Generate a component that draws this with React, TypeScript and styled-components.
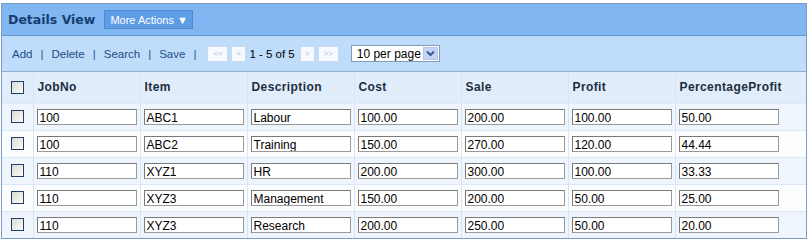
import React from "react";
import styled, { createGlobalStyle } from "styled-components";

const Global = createGlobalStyle`
  html, body { margin: 0; padding: 0; background: #ffffff; }
  body { font-family: "Liberation Sans", Arial, sans-serif; }
`;

const Panel = styled.div`
  margin: 3px 0 0 1px;
  width: 806px;
  box-sizing: border-box;
  border: 1px solid #7a9cc4;
  background: #ffffff;
`;

const TitleBar = styled.div`
  height: 31px;
  display: flex;
  align-items: center;
  gap: 9px;
  padding: 0 6px;
  background: #80b6f2;
  border-bottom: 1px solid #6a95c6;
`;

const Title = styled.div`
  font-family: "DejaVu Sans", Verdana, sans-serif;
  font-weight: bold;
  font-size: 12.5px;
  color: #163e6e;
`;

const MoreButton = styled.div`
  width: 89px;
  height: 19px;
  box-sizing: border-box;
  padding: 0 5px;
  display: flex;
  align-items: center;
  background: #5f9ce6;
  border: 1px solid #4f88cf;
  color: #ffffff;
  font-size: 11px;
  white-space: nowrap;
`;

const Toolbar = styled.div`
  height: 35px;
  display: flex;
  align-items: center;
  padding: 0 10px;
  background: #bfdcfa;
  border-bottom: 1px solid #8db1d9;
  font-size: 11.5px;
  color: #1d4e88;
`;

const Link = styled.span`
  color: #1d4e88;
`;

const Sep = styled.span`
  margin: 0 8px;
  color: #1d4e88;
`;

const Pager = styled.div`
  display: flex;
  align-items: center;
  gap: 3px;
  margin-left: 3px;
  font-size: 11.5px;
  color: #000;
`;

const PageBtn = styled.div<{ $w: number }>`
  width: ${(p) => p.$w}px;
  height: 16px;
  box-sizing: border-box;
  border: 1px solid #c9daee;
  background: #f6f9fd;
  color: #a9bfd8;
  font-size: 8px;
  display: flex;
  align-items: center;
  justify-content: center;
`;

const PageText = styled.span`
  margin: 0 2px 0 0;
`;

const Select = styled.div`
  margin-left: 12px;
  width: 89px;
  height: 17px;
  box-sizing: border-box;
  border: 1px solid #7f9db9;
  background: #ffffff;
  display: flex;
  align-items: center;
  justify-content: space-between;
  padding: 0 1px 0 5px;
  font-size: 12px;
  color: #000;
`;

const SelectArrow = styled.div`
  width: 15px;
  height: 13px;
  background: #c5d4f4;
  border: 1px solid #b4c6ea;
  box-sizing: border-box;
  display: flex;
  align-items: center;
  justify-content: center;
`;

const Table = styled.table`
  width: 100%;
  border-collapse: collapse;
  table-layout: fixed;
`;

const HeadRow = styled.tr`
  height: 31px;
  background: #e1edfb;
`;

const Th = styled.th`
  text-align: left;
  padding: 0 0 0 4px;
  font-size: 12px;
  font-weight: bold;
  letter-spacing: 0.4px;
  color: #1e2d3f;
  border-left: 1px solid #d8e5f4;
  white-space: nowrap;
  &:first-child { border-left: none; padding-left: 9px; }
`;

const Row = styled.tr<{ $alt: boolean }>`
  height: 27px;
  background: ${(p) => (p.$alt ? "#fbfdff" : "#eef5fd")};
  border-top: 1px solid #dde8f5;
`;

const Td = styled.td`
  padding: 0 0 0 3px;
  border-left: 1px solid #d8e5f4;
  vertical-align: middle;
  &:first-child { border-left: none; padding-left: 9px; }
`;

const Check = styled.div`
  width: 13px;
  height: 13px;
  box-sizing: border-box;
  border: 1px solid #1f3f66;
  background: linear-gradient(135deg, #dcdcd6 0%, #f4f4f0 80%, #ffffff 100%);
`;

const Input = styled.div`
  width: 100px;
  height: 16px;
  box-sizing: border-box;
  border: 1px solid #9a9a9a;
  border-top-color: #7a7a7a;
  border-left-color: #7a7a7a;
  background: #ffffff;
  font-size: 12px;
  line-height: 17px;
  padding-left: 2px;
  color: #000;
  overflow: hidden;
  white-space: nowrap;
`;

const columns = ["JobNo", "Item", "Description", "Cost", "Sale", "Profit", "PercentageProfit"];

const rows = [
  ["100", "ABC1", "Labour", "100.00", "200.00", "100.00", "50.00"],
  ["100", "ABC2", "Training", "150.00", "270.00", "120.00", "44.44"],
  ["110", "XYZ1", "HR", "200.00", "300.00", "100.00", "33.33"],
  ["110", "XYZ3", "Management", "150.00", "200.00", "50.00", "25.00"],
  ["110", "XYZ3", "Research", "200.00", "250.00", "50.00", "20.00"],
];

export default function App() {
  return (
    <>
      <Global />
      <Panel>
        <TitleBar>
          <Title>Details View</Title>
          <MoreButton>More Actions ▼</MoreButton>
        </TitleBar>
        <Toolbar>
          <Link>Add</Link>
          <Sep>|</Sep>
          <Link>Delete</Link>
          <Sep>|</Sep>
          <Link>Search</Link>
          <Sep>|</Sep>
          <Link>Save</Link>
          <Sep>|</Sep>
          <Pager>
            <PageBtn $w={21}>&lt;&lt;</PageBtn>
            <PageBtn $w={15}>&lt;</PageBtn>
            <PageText>1 - 5 of 5</PageText>
            <PageBtn $w={15}>&gt;</PageBtn>
            <PageBtn $w={21}>&gt;&gt;</PageBtn>
          </Pager>
          <Select>
            <span>10 per page</span>
            <SelectArrow>
              <svg width="9" height="7" viewBox="0 0 9 7">
                <path d="M1 1.5 L4.5 5 L8 1.5" stroke="#3a5a9c" strokeWidth="2" fill="none" />
              </svg>
            </SelectArrow>
          </Select>
        </Toolbar>
        <Table>
          <colgroup>
            <col style={{ width: 31 }} />
            {columns.slice(0, 6).map((c) => (
              <col key={c} style={{ width: 107 }} />
            ))}
            <col />
          </colgroup>
          <thead>
            <HeadRow>
              <Th>
                <Check />
              </Th>
              {columns.map((c) => (
                <Th key={c}>{c}</Th>
              ))}
            </HeadRow>
          </thead>
          <tbody>
            {rows.map((r, ri) => (
              <Row key={ri} $alt={ri % 2 === 1}>
                <Td>
                  <Check />
                </Td>
                {r.map((v, ci) => (
                  <Td key={ci}>
                    <Input>{v}</Input>
                  </Td>
                ))}
              </Row>
            ))}
          </tbody>
        </Table>
      </Panel>
    </>
  );
}
